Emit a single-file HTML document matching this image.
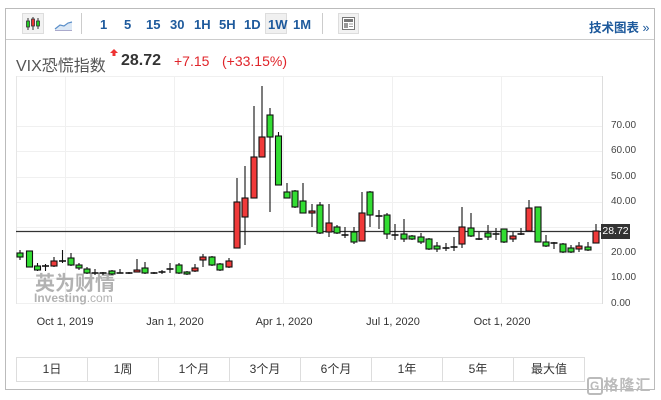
<!DOCTYPE html>
<html><head><meta charset="utf-8"><style>
html,body{margin:0;padding:0;background:#fff;width:661px;height:400px;overflow:hidden}
body{font-family:"Liberation Sans","Noto Sans CJK SC",sans-serif;position:relative}
.a{position:absolute}
.box{left:5px;top:8px;width:650px;height:382px;border:1px solid #bbb;box-sizing:border-box}
.tb{color:#1e5a9c;font-weight:bold;font-size:13px;top:17px}
.btns{left:16px;top:357px;width:569px;height:25px;border:1px solid #ddd;display:flex;box-sizing:border-box}
.btns div{flex:1;border-right:1px solid #ddd;text-align:center;font-size:12px;line-height:23px;color:#333}
.btns div:last-child{border-right:none}
.dl{top:316px;font-size:11px;color:#333;width:80px;text-align:center}
.yl{left:611px;font-size:10px;color:#444}
</style></head><body>
<div class="a box"></div>
<div class="a" style="left:6px;top:39px;width:648px;height:1px;background:#ccc"></div>
<!-- toolbar icons -->
<div class="a" style="left:22px;top:13px;width:22px;height:21px;background:#f2f2f2;border:1px solid #ddd;box-sizing:border-box"></div>
<svg class="a" style="left:22px;top:13px" width="60" height="22">
<line x1="6" y1="5" x2="6" y2="17" stroke="#333"/><rect x="4.5" y="8" width="3" height="6" fill="#2c2" stroke="#333" stroke-width=".8"/>
<line x1="11" y1="4" x2="11" y2="17" stroke="#333"/><rect x="9.5" y="6" width="3" height="7" fill="#e33" stroke="#333" stroke-width=".8"/>
<line x1="16" y1="5" x2="16" y2="16" stroke="#333"/><rect x="14.5" y="8" width="3" height="5" fill="#2c2" stroke="#333" stroke-width=".8"/>
<path d="M33 16 L38 12 L42 13 L46 10 L50 9 L50 17 L33 17Z" fill="#dce8f5"/>
<path d="M33 16 L38 12 L42 13 L46 10 L50 9" stroke="#5b8fc9" fill="none" stroke-width="1.2"/>
<line x1="33" y1="17.5" x2="50" y2="17.5" stroke="#aac"/>
</svg>
<div class="a" style="left:81px;top:13px;width:1px;height:21px;background:#ccc"></div>
<div class="a tb" style="left:100px">1</div>
<div class="a tb" style="left:124px">5</div>
<div class="a tb" style="left:146px">15</div>
<div class="a tb" style="left:170px">30</div>
<div class="a tb" style="left:194px">1H</div>
<div class="a tb" style="left:219px">5H</div>
<div class="a tb" style="left:244px">1D</div>
<div class="a" style="left:265px;top:13px;width:22px;height:21px;background:#f0f0f0;border:1px solid #ddd;box-sizing:border-box"></div>
<div class="a tb" style="left:268px">1W</div>
<div class="a tb" style="left:293px">1M</div>
<div class="a" style="left:322px;top:13px;width:1px;height:21px;background:#ccc"></div>
<div class="a" style="left:338px;top:13px;width:21px;height:21px;background:#f2f2f2;border:1px solid #ddd;box-sizing:border-box"></div>
<svg class="a" style="left:338px;top:13px" width="21" height="21"><rect x="4.5" y="4.5" width="12" height="12" fill="#fff" stroke="#777"/><rect x="6" y="6" width="9" height="3" fill="#777"/><rect x="6" y="10" width="4" height="5" fill="#999"/><line x1="11" y1="11" x2="15" y2="11" stroke="#999"/><line x1="11" y1="13.5" x2="15" y2="13.5" stroke="#999"/></svg>
<div class="a tb" style="left:589px;top:17px;font-size:12.5px">技术图表 <span style="font-weight:normal">»</span></div>
<!-- title -->
<div class="a" style="left:16px;top:52px;font-size:16px;color:#555">VIX恐慌指数</div>
<svg class="a" style="left:110px;top:49px" width="8" height="8"><path d="M4 0 L8 4 L5.5 4 L5.5 7 L2.5 7 L2.5 4 L0 4Z" fill="#e33"/></svg>
<div class="a" style="left:121px;top:52px;font-size:16px;font-weight:bold;color:#333">28.72</div>
<div class="a" style="left:174px;top:53px;font-size:14px;color:#e0242a">+7.15</div>
<div class="a" style="left:222px;top:53px;font-size:14px;color:#e0242a">(+33.15%)</div>
<!-- chart -->
<svg class="a" style="left:0;top:0" width="661" height="400">
<g stroke="#f0f0f0" stroke-width="1">
<line x1="16" y1="76.5" x2="602" y2="76.5"/>
<line x1="16" y1="126.5" x2="602" y2="126.5"/><line x1="16" y1="151.5" x2="602" y2="151.5"/><line x1="16" y1="177.5" x2="602" y2="177.5"/><line x1="16" y1="202.5" x2="602" y2="202.5"/><line x1="16" y1="227.5" x2="602" y2="227.5"/><line x1="16" y1="253.5" x2="602" y2="253.5"/><line x1="16" y1="278.5" x2="602" y2="278.5"/><line x1="16" y1="303.5" x2="602" y2="303.5"/>
<line x1="65.5" y1="76" x2="65.5" y2="304"/><line x1="174.5" y1="76" x2="174.5" y2="304"/><line x1="283.5" y1="76" x2="283.5" y2="304"/><line x1="392.5" y1="76" x2="392.5" y2="304"/><line x1="501.5" y1="76" x2="501.5" y2="304"/>
</g>
<line x1="16.5" y1="76" x2="16.5" y2="304" stroke="#e6e6e6"/>
<line x1="602.5" y1="76" x2="602.5" y2="304" stroke="#ddd"/>
<text x="35" y="290" font-family="Liberation Sans,Noto Sans CJK SC,sans-serif" font-size="20" font-weight="bold" fill="#999" opacity=".75">英为财情</text>
<text x="34" y="302" font-family="Liberation Sans,sans-serif" font-size="12" font-weight="bold" fill="#999" opacity=".75">Investing<tspan font-weight="normal">.com</tspan></text>
<line x1="16" y1="231.5" x2="602" y2="231.5" stroke="#333" stroke-width="1.2"/>
<g stroke="#111" stroke-width="1.1" id="c"></g>
</svg>
<div class="a" style="left:601px;top:224px;width:29px;height:15px;background:#333;color:#fff;font-size:10.5px;line-height:15px;text-align:center">28.72</div>
<div class="a yl" style="top:120px">70.00</div>
<div class="a yl" style="top:145px">60.00</div>
<div class="a yl" style="top:171px">50.00</div>
<div class="a yl" style="top:196px">40.00</div>
<div class="a yl" style="top:247px">20.00</div>
<div class="a yl" style="top:272px">10.00</div>
<div class="a yl" style="top:298px">0.00</div>
<div class="a dl" style="left:25px">Oct 1, 2019</div>
<div class="a dl" style="left:135px">Jan 1, 2020</div>
<div class="a dl" style="left:244px">Apr 1, 2020</div>
<div class="a dl" style="left:353px">Jul 1, 2020</div>
<div class="a dl" style="left:462px">Oct 1, 2020</div>
<div class="a btns"><div>1日</div><div>1周</div><div>1个月</div><div>3个月</div><div>6个月</div><div>1年</div><div>5年</div><div>最大值</div></div>
<div class="a" style="left:587px;top:374px;font-size:15px;color:#bbb;font-weight:bold;letter-spacing:1px"><span style="border:2px solid #bbb;border-radius:3px;padding:0 1px;font-size:12px">G</span>格隆汇</div>
<script>
var d=[[20,250,260,253,257,'g'],[29.5,251,267,251,267,'g'],[37.5,263,271,266,270,'g'],[45.5,264,271,266,266,'c'],[54,257,267,261,266,'r'],[62.5,250,263,261,261,'c'],[71,253,266,258,265,'g'],[79,263,270,265,268,'g'],[87,267,274,269,273,'g'],[95,269,275,273,273,'c'],[103,272,275,273,273,'c'],[112,270,275,271,274,'g'],[120,269,273,273,273,'c'],[129,272,274,273,273,'c'],[137,259,272,270,272,'r'],[145,262,274,268,273,'g'],[154,272,274,273,273,'c'],[162,270,274,272,272,'c'],[170,263,273,269,269,'c'],[179,263,274,265,273,'g'],[187,271,275,272,274,'g'],[195,264,272,268,271,'r'],[203,254,267,257,260,'r'],[212,256,266,257,265,'g'],[220,263,271,264,270,'g'],[229,258,268,261,267,'r'],
[237,178,248,202,248,'r'],[245,166,245,198,217,'r'],[254,106,198,157,198,'r'],[262,86,157,137,157,'r'],[270,108,212,115,137,'g'],[278.5,132,185,136,185,'g'],[287,183,198,192,198,'g'],[295,190,208,191,207,'g'],[303,183,213,201,213,'g'],[312,204,227,211,213,'r'],[320,202,234,205,233,'g'],[329,204,237,223,232,'r'],[337,225,234,227,233,'g'],[345,227,238,235,235,'c'],[354,227,244,232,242,'g'],[362,192,241,213,241,'r'],[370,191,227,192,215,'g'],[379,210,229,216,216,'c'],[387,213,239,215,234,'g'],[395,224,240,235,235,'c'],[404,219,242,234,239,'g'],[412,235,240,236,239,'g'],[421,233,244,237,242,'g'],[429,238,250,239,249,'g'],[437,242,252,246,249,'g'],[446,243,251,248,248,'c'],[454,237,251,247,247,'c'],[462,207,248,227,244,'r'],[471,213,237,228,236,'g'],[479,232,240,239,239,'c'],[488,225,240,233,237,'g'],[496,228,240,234,234,'c'],[504,229,243,229,242,'g'],[513,232,242,236,239,'r'],[521,228,235,234,234,'c'],[529,200,231,208,231,'r'],[538,207,242,207,242,'g'],[546,235,247,242,246,'g'],[554,242,249,243,243,'c'],[563,243,253,244,252,'g'],[571,245,253,248,252,'g'],[579,242,252,246,249,'r'],[588,242,251,247,250,'g'],[596,224,243,231,243,'r']];
var s='';d.forEach(function(c){var x=c[0];s+='<line x1="'+x+'" y1="'+c[1]+'" x2="'+x+'" y2="'+c[2]+'"/>';if(c[5]=='c'){s+='<line x1="'+(x-3.5)+'" y1="'+c[3]+'" x2="'+(x+3.5)+'" y2="'+c[3]+'" stroke-width="1.6"/>';}else{var h=Math.max(c[4]-c[3],2);s+='<rect x="'+(x-3)+'" y="'+c[3]+'" width="6" height="'+h+'" fill="'+(c[5]=='g'?'#33dd33':'#f03a3a')+'"/>';}});
document.getElementById('c').innerHTML=s;
</script>
</body></html>
